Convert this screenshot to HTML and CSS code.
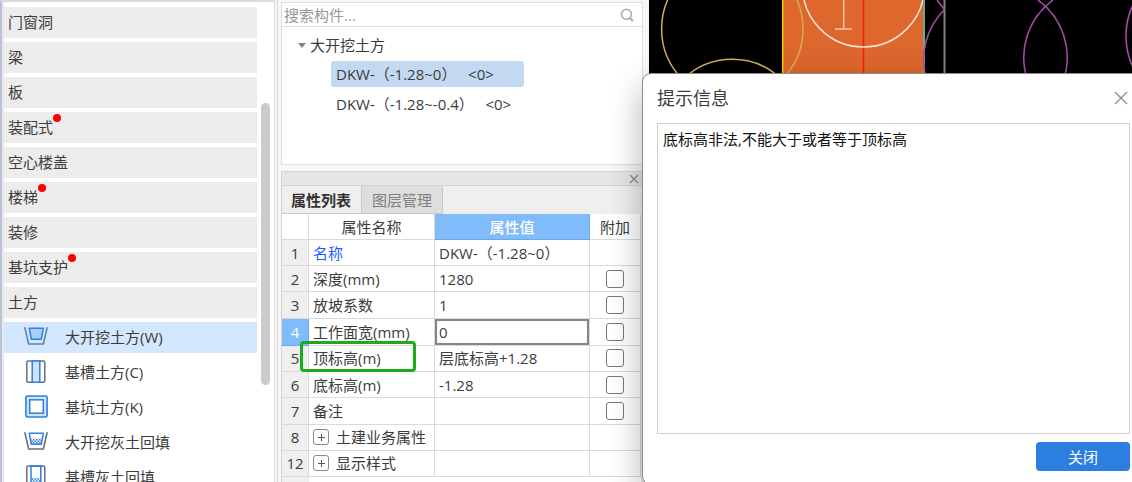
FILE: index.html
```html
<!DOCTYPE html>
<html lang="zh-CN">
<head>
<meta charset="utf-8">
<title>提示信息</title>
<link rel="stylesheet" href="styles.css">
</head>
<body>
<svg class="defs" aria-hidden="true">
  <defs>
    <pattern id="fill-dots" width="3" height="3" patternUnits="userSpaceOnUse">
      <rect width="1.5" height="1.5" fill="#2f7fe6"/>
      <rect x="1.5" y="1.5" width="1.5" height="1.5" fill="#2f7fe6"/>
    </pattern>
  </defs>
</svg>
<div class="app">
  <nav class="sidebar">
    <div class="nav-list">
      <button class="group"><span class="label">门窗洞</span></button>
      <button class="group"><span class="label">梁</span></button>
      <button class="group"><span class="label">板</span></button>
      <button class="group"><span class="label dotted">装配式</span></button>
      <button class="group"><span class="label">空心楼盖</span></button>
      <button class="group"><span class="label dotted">楼梯</span></button>
      <button class="group"><span class="label">装修</span></button>
      <button class="group"><span class="label dotted">基坑支护</span></button>
      <button class="group"><span class="label">土方</span></button>
      <button class="tool selected">
        <svg class="tool-icon" viewBox="0 0 24 24"><path d="M.8 2.200 4.600 19h14.800L23.200 2.200" fill="none" stroke="#5f86ad" stroke-width="1.600"/><path d="M5.300 3.300h14l-2 11H7.300z" fill="#a9cdf8" stroke="#2f7fe6" stroke-width="1.500" stroke-linejoin="round"/></svg>
        <span>大开挖土方(W)</span>
      </button>
      <button class="tool">
        <svg class="tool-icon" viewBox="0 0 24 24"><rect x="2.800" y=".9" width="18" height="21.400" rx="1.500" fill="#fff" stroke="#65707f" stroke-width="1.500"/><path d="M8.200 1h7.600v21.300H8.200z" fill="#cfe3fb" stroke="#2f7fe6" stroke-width="1.500"/></svg>
        <span>基槽土方(C)</span>
      </button>
      <button class="tool">
        <svg class="tool-icon" viewBox="0 0 24 24"><rect x="1.900" y="1" width="21.200" height="21" rx="1.500" fill="#cfe3fb" stroke="#2f7fe6" stroke-width="1.600"/><rect x="5.700" y="4.800" width="13.600" height="13.400" fill="#fff" stroke="#2f7fe6" stroke-width="1.500"/></svg>
        <span>基坑土方(K)</span>
      </button>
      <button class="tool">
        <svg class="tool-icon" viewBox="0 0 24 24"><path d="M.8 2.200 4.600 19h14.800L23.200 2.200" fill="none" stroke="#65707f" stroke-width="1.600"/><path d="M6.200 8.800h12.200l-1 5.500H7.300z" fill="url(#fill-dots)"/><path d="M5.300 3.300h14l-2 11H7.300z" fill="none" stroke="#2f7fe6" stroke-width="1.500" stroke-linejoin="round"/></svg>
        <span>大开挖灰土回填</span>
      </button>
      <button class="tool">
        <svg class="tool-icon" viewBox="0 0 24 24"><rect x="2.800" y=".9" width="18" height="21.400" rx="1.500" fill="#fff" stroke="#65707f" stroke-width="1.500"/><path d="M7 13h9.800v9H7z" fill="url(#fill-dots)"/><path d="M7 1h9.800v21.300H7z" fill="none" stroke="#2f7fe6" stroke-width="1.500"/></svg>
        <span>基槽灰土回填</span>
      </button>
    </div>
    <div class="rail"><div class="thumb"></div></div>
  </nav>

  <section class="middle">
    <div class="components">
      <div class="search">
        <input type="text" placeholder="搜索构件..." aria-label="搜索构件">
        <svg class="search-icon" viewBox="0 0 14 14"><circle cx="6.500" cy="6.300" r="5" fill="none" stroke="#a8a8a8" stroke-width="1.500"/><path d="m10 10 3 3" stroke="#a8a8a8" stroke-width="1.800"/></svg>
      </div>
      <div class="tree">
        <div class="tree-root"><span class="caret"></span>大开挖土方</div>
        <button class="leaf active">DKW-（-1.28~0）&nbsp;&nbsp;&nbsp;&lt;0&gt;</button>
        <button class="leaf">DKW-（-1.28~-0.4）&nbsp;&nbsp;&nbsp;&lt;0&gt;</button>
      </div>
    </div>
    <div class="properties">
      <div class="dock-bar">
        <button class="dock-close" aria-label="关闭面板"><svg viewBox="0 0 10 10"><path d="m1 1 8 8M9 1 1 9" stroke="#8c8c8c" stroke-width="1.200"/></svg></button>
      </div>
      <div class="tabs">
        <button class="tab current">属性列表</button>
        <button class="tab">图层管理</button>
      </div>
      <div class="sheet">
        <table class="grid">
          <colgroup><col class="c-no"><col class="c-name"><col><col class="c-add"></colgroup>
          <thead>
            <tr><th></th><th>属性名称</th><th class="picked">属性值</th><th>附加</th></tr>
          </thead>
          <tbody>
            <tr><td class="no">1</td><td class="link">名称</td><td>DKW-（-1.28~0）</td><td></td></tr>
            <tr><td class="no">2</td><td>深度(mm)</td><td>1280</td><td class="add"><input type="checkbox" aria-label="深度附加"></td></tr>
            <tr><td class="no">3</td><td>放坡系数</td><td>1</td><td class="add"><input type="checkbox" aria-label="放坡系数附加"></td></tr>
            <tr><td class="no picked">4</td><td>工作面宽(mm)</td><td class="editing"><input class="edit" type="text" value="0" aria-label="工作面宽"></td><td class="add"><input type="checkbox" aria-label="工作面宽附加"></td></tr>
            <tr><td class="no">5</td><td class="marked">顶标高(m)</td><td>层底标高+1.28</td><td class="add"><input type="checkbox" aria-label="顶标高附加"></td></tr>
            <tr><td class="no">6</td><td>底标高(m)</td><td>-1.28</td><td class="add"><input type="checkbox" aria-label="底标高附加"></td></tr>
            <tr><td class="no">7</td><td>备注</td><td></td><td class="add"><input type="checkbox" aria-label="备注附加"></td></tr>
            <tr><td class="no">8</td><td><div class="fold"><button class="expand" aria-label="展开"></button>土建业务属性</div></td><td></td><td></td></tr>
            <tr><td class="no">12</td><td><div class="fold"><button class="expand" aria-label="展开"></button>显示样式</div></td><td></td><td></td></tr>
          </tbody>
        </table>
        <div class="rest"></div>
      </div>
    </div>
  </section>

  <main class="view">
    <svg class="drawing" width="483" height="80" viewBox="649 0 483 80" fill="none">
      <path fill="#dd672d" d="M782 0h143v80H782z"/>
      <g stroke="#d0ae55" stroke-width="1.500"><circle cx="732.300" cy="29" r="70.700"/><circle cx="732.300" cy="130" r="70.700"/></g>
      <path stroke="#f5d000" stroke-width="1.500" d="M782.700 0v80"/>
      <path stroke="#f01c0c" stroke-width="1.500" d="M863.500 0v80"/>
      <circle cx="863.500" cy="-14" r="61" stroke="#f8e4dc" stroke-width="1.500"/>
      <path stroke="#f3c3ad" stroke-width="1.500" d="M843.700 0v29M835 29h17"/>
      <path stroke="#57b796" stroke-width="1.800" d="M924 0v80"/>
      <path stroke="#858585" stroke-width="2" d="M944.500 0v80"/>
      <g stroke="#a54aa8" stroke-width="1.600">
        <path d="M944.500 9.500A71 71 0 0 0 926.500 80M937 0l7.500 9.500"/>
        <path d="M1038 0A71 71 0 0 1 1063.500 80M1053 0A71 71 0 0 0 1027.500 80"/>
        <circle cx="1197" cy="36" r="71"/>
      </g>
    </svg>
    <div class="dialog" role="dialog" aria-labelledby="dlg-title">
      <header class="dialog-head">
        <h1 id="dlg-title">提示信息</h1>
        <button class="dialog-close" aria-label="关闭窗口"><svg viewBox="0 0 14 14"><path d="m1 1 12 12M13 1 1 13" stroke="#8a8a8a" stroke-width="1.200"/></svg></button>
      </header>
      <div class="message">底标高非法,不能大于或者等于顶标高</div>
      <footer class="dialog-foot"><button class="primary">关闭</button></footer>
    </div>
  </main>
</div>
</body>
</html>
```
FILE: styles.css
```css
* { box-sizing: border-box; }
body {
  margin: 0;
  overflow: hidden;
  font: 15px/20px "Open Sans", "Noto Sans CJK SC", sans-serif;
  color: #3c3c3c;
}
button, input {
  margin: 0;
  padding: 0;
  border: 0;
  background: none;
  font: inherit;
  color: inherit;
}
svg { display: block; }
.defs { position: absolute; width: 0; height: 0; }

.app {
  display: grid;
  grid-template-columns: 275px 374px minmax(0, 1fr);
  height: 100vh;
  background: #f7f7f7;
}

/* component categories */
.sidebar {
  display: flex;
  min-height: 0;
  overflow: hidden;
  padding-left: 2px;
  background: linear-gradient(90deg, #e9e9e9 2px, #fff 2px);
  border-top: 2px solid #dcdcdc;
  border-right: 1px solid #d9d9d9;
  border-left: 2px solid #b9c3d8;
}
.nav-list {
  display: flex;
  flex: 1;
  flex-direction: column;
  gap: 4px;
  padding-top: 5px;
}
.group, .tool {
  display: flex;
  flex: none;
  align-items: center;
  height: 31px;
  padding-bottom: 2px;
  text-align: left;
  white-space: nowrap;
}
.group { padding-left: 4px; background: #ececec; }
.tool { gap: 17px; padding-left: 20px; }
.tool.selected { background: #d3e7fe; }
.tool-icon { width: 24px; height: 24px; }
.label { position: relative; }
.dotted::after {
  content: "";
  position: absolute;
  top: -3px;
  right: -8px;
  width: 8px;
  height: 8px;
  border-radius: 50%;
  background: #f00;
}
.rail { width: 17px; padding: 101px 4px 0; }
.thumb { width: 9px; height: 282px; border-radius: 5px; background: #cbcbcb; }

/* component tree */
.middle {
  display: flex;
  flex-direction: column;
  gap: 6px;
  min-height: 0;
  margin-left: 2px;
  padding: 2px 6px 0 3px;
  border-left: 1px solid #d9d9d9;
}
.components {
  flex: none;
  height: 163px;
  border: 1px solid #dedede;
  background: #fff;
}
.search {
  display: flex;
  align-items: center;
  height: 24px;
  padding: 0 8px 0 2px;
  border-bottom: 1px solid #dedede;
}
.search input { flex: 1; min-width: 0; height: 22px; outline: 0; }
.search input::placeholder { color: #999; opacity: 1; }
.search-icon { width: 14px; height: 14px; }
.tree {
  display: flex;
  flex-direction: column;
  gap: 4px;
  align-items: flex-start;
  padding: 8px 0 0 16px;
}
.tree-root { display: flex; align-items: center; gap: 4px; height: 22px; padding-bottom: 2px; }
.caret {
  border: 4px solid transparent;
  border-top: 5px solid #858585;
  border-bottom: 0;
}
.leaf {
  width: 193px;
  height: 26px;
  margin-left: 33px;
  padding-left: 5px;
  border-radius: 3px;
  text-align: left;
  white-space: nowrap;
}
.leaf.active { background: #c2d9f1; }

/* property sheet */
.properties {
  display: flex;
  flex: 1;
  flex-direction: column;
  min-height: 0;
  overflow: hidden;
  border-left: 1px solid #cfd4da;
  background: #efefef;
}
.dock-bar {
  display: flex;
  flex: none;
  align-items: center;
  justify-content: flex-end;
  height: 15px;
  padding-right: 4px;
  border-top: 1px solid #d4d4d4;
  border-bottom: 1px solid #d4d4d4;
  background: #e6e6e6;
}
.dock-close svg { width: 10px; height: 10px; }
.tabs { display: flex; flex: none; height: 28px; }
.tab {
  padding: 0 10px;
  border-right: 1px solid #c3cacd;
  border-bottom: 1px solid #c3cacd;
  background: #dedede;
  color: #808080;
}
.tab.current { padding: 0 10px 0 9px; background: #efefef; color: #333; font-weight: 700; }
.sheet {
  display: flex;
  flex: 1;
  flex-direction: column;
  padding-right: 2px;
}
.grid {
  width: 100%;
  height: 263px;
  table-layout: fixed;
  border-collapse: separate;
  border-spacing: 0;
  background: #fff;
}
.c-no { width: 27px; }
.c-name { width: 126px; }
.c-add { width: 51px; }
.grid th, .grid td {
  height: 26px;
  padding: 0 0 0 4px;
  border-right: 1px solid #d9d9d9;
  border-bottom: 1px solid #d9d9d9;
  font-weight: 400;
  text-align: left;
  white-space: nowrap;
}
.grid th { padding: 0; text-align: center; }
.grid .no { padding: 0; background: #efefef; text-align: center; }
.grid .picked { background: #80bbfa; border-color: #69a9ee; color: #fff; font-weight: 500; }
.grid .link { color: #1f5fff; }
.grid .add { padding: 0; }
.grid .editing { padding: 0; }
.edit {
  display: block;
  width: 100%;
  height: 26px;
  padding-left: 2px;
  border: 2px solid #858585;
  outline: 0;
}
.add input {
  display: block;
  appearance: none;
  width: 18px;
  height: 18px;
  margin: 0 auto;
  border: 1px solid #777;
  border-radius: 3px;
  background: #fff;
}
.marked { position: relative; }
.marked::after {
  content: "";
  position: absolute;
  inset: -5px 18px -1px -9px;
  border: 3px solid #1bab1b;
  border-radius: 4px;
}
.fold { display: flex; align-items: center; gap: 7px; }
.expand {
  width: 16px;
  height: 16px;
  border: 1px solid #8a8a8a;
  border-radius: 3px;
  background:
    linear-gradient(#555, #555) center / 7px 1px no-repeat,
    linear-gradient(#555, #555) center / 1px 7px no-repeat;
}
.rest {
  flex: 1;
  background: linear-gradient(90deg, #efefef 27px, #fff 27px);
}

/* drawing canvas and message dialog */
.view { position: relative; background: #000; }
.drawing { max-width: none; }
.dialog {
  position: absolute;
  inset: 74px -8px -2px -6px;
  display: flex;
  flex-direction: column;
  padding: 0 10px 13px 14px;
  border-radius: 8px;
  background: #fff;
  box-shadow: 0 0 0 1px #8c8c8c, 0 14px 34px rgba(0, 0, 0, .32);
}
.dialog-head {
  display: flex;
  align-items: center;
  justify-content: space-between;
  height: 49px;
  padding: 0 2px 2px 0;
}
.dialog-head h1 { margin: 0; font-size: 18px; font-weight: 400; line-height: 24px; }
.dialog-close svg { width: 14px; height: 14px; }
.message {
  flex: 1;
  padding: 5px;
  border: 1px solid #cfcfcf;
  color: #111;
}
.dialog-foot { display: flex; justify-content: flex-end; padding-top: 8px; }
.primary {
  width: 94px;
  height: 29px;
  border-radius: 4px;
  background: #2c7fe0;
  color: #fff;
}
```
